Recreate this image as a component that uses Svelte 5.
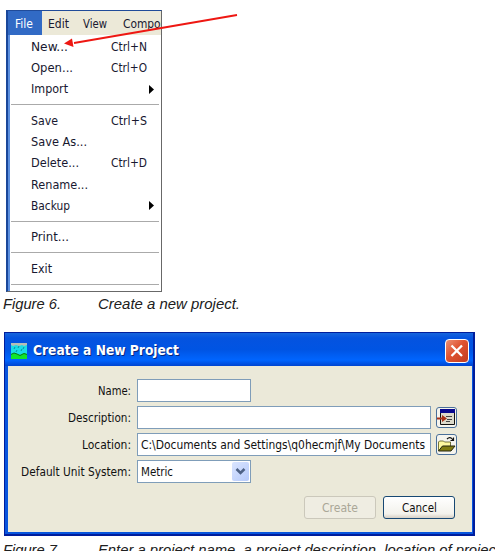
<script>
  const menu = [
    { label: 'New...', w: 37, key: 'Ctrl+N' },
    { label: 'Open...', w: 42, key: 'Ctrl+O' },
    { label: 'Import', w: 37, sub: true },
    { sep: true },
    { label: 'Save', w: 27, key: 'Ctrl+S' },
    { label: 'Save As...', w: 56, key: '' },
    { label: 'Delete...', w: 48, key: 'Ctrl+D' },
    { label: 'Rename...', w: 57, key: '' },
    { label: 'Backup', w: 39, sub: true },
    { sep: true },
    { label: 'Print...', w: 38, key: '' },
    { sep: true },
    { label: 'Exit', w: 21, key: '' },
    { sep: true }
  ];
</script>

{#snippet fit(value, width, kind = '')}
  <svg class="fit {kind}" {width} height="20"><text x="0" y="14" textLength={width} lengthAdjust="spacingAndGlyphs">{value}</text></svg>
{/snippet}

<main>
  <section class="shot">
    <div class="menubar">
      <div class="active">{@render fit('File', 18)}</div>
      <div class="edit">{@render fit('Edit', 21)}</div>
      <div class="view">{@render fit('View', 24)}</div>
      <div class="comp">{@render fit('Compor', 42)}</div>
    </div>
    <div class="menu">
      {#each menu as item}
        {#if item.sep}
          <div class="sep"></div>
        {:else}
          <div class="item">
            {@render fit(item.label, item.w)}
            {#if item.key}<span class="key">{@render fit(item.key, 36)}</span>{/if}
            {#if item.sub}<svg class="tri" width="5" height="9"><path d="M0 0L5 4.5L0 9Z" /></svg>{/if}
          </div>
        {/if}
      {/each}
    </div>
  </section>
  <svg class="arrow" width="180" height="40" viewBox="0 0 180 40">
    <path d="M177 5L14 33" stroke="#ee1712" stroke-width="1.8" />
    <path d="M4 33.5L12 28.5L13.5 37Z" fill="#ee1712" />
  </svg>

  <div class="caption">
    <span class="number">{@render fit('Figure 6.', 58, 'cap')}</span>
    {@render fit('Create a new project.', 142, 'cap')}
  </div>

  <section class="dialog">
    <header>
      <svg width="16" height="16" viewBox="0 0 16 16">
        <path fill="#18dce6" d="M0 0h16v16H0z" />
        <path fill="#b5bdb5" d="M0 0h16v2l-3 1-2-1-3 1-3-1-3 1-2-1z" />
        <path stroke="#08758c" stroke-width=".8" d="M4 4l-1 2M8 3l-1 2M13 4l-1 2M6 7l-1 2M11 6l-1 2" />
        <path fill="#10e52b" d="M0 11l3-1 3 1 3 1 4-2 3 1v5H0z" />
        <path stroke="#087b18" fill="none" d="M0 11.5l3-1.5 3 1 3 1.5 4-2 3 1" />
      </svg>
      {@render fit('Create a New Project', 146, 'title')}
      <div class="close">
        <svg width="24" height="24" viewBox="0 0 24 24"><path d="M6.5 6.5L17 17M17 6.5L6.5 17" stroke="#fff" stroke-width="2.3" /></svg>
      </div>
    </header>
    <div class="body">
      <div class="row">
        <div class="label">{@render fit('Name:', 33)}</div>
        <div class="field short"></div>
      </div>
      <div class="row">
        <div class="label">{@render fit('Description:', 63)}</div>
        <div class="field"></div>
        <div class="tool">
          <svg width="19" height="19" viewBox="0 0 19 19">
            <path fill="#dcdacb" stroke="#111" d="M3.5 2.5h14v14h-14z" />
            <path fill="#08088e" d="M3 1h15v4H3z" />
            <path stroke="#444" d="M9 8.5h6M10 11.5h5M9 13.5h4" />
            <path fill="#a83218" d="M0 9.5h5V7l5 3.5-5 3.5v-2.5H0z" />
          </svg>
        </div>
      </div>
      <div class="row">
        <div class="label">{@render fit('Location:', 49)}</div>
        <div class="field">{@render fit('C:\\Documents and Settings\\q0hecmjf\\My Documents', 284)}</div>
        <div class="tool">
          <svg width="19" height="19" viewBox="0 0 19 19">
            <path fill="#fff9a0" stroke="#55551a" stroke-width=".8" d="M1.5 16V7l1-1h4l1 1h6v4" />
            <path fill="#817d12" stroke="#25250c" d="M1.5 16l4-5h12.5l-4 5z" />
            <path fill="none" stroke="#111" stroke-width="1.2" d="M10 4c2-2 4-2 6 1M16.5 2.5v3h-3" />
          </svg>
        </div>
      </div>
      <div class="row">
        <div class="label">{@render fit('Default Unit System:', 110)}</div>
        <div class="field short">
          {@render fit('Metric', 32)}
          <div class="drop"><svg width="17" height="19"><path d="M4.5 7L8.5 11L12.5 7" fill="none" stroke="#4d6185" stroke-width="2.5" /></svg></div>
        </div>
      </div>
      <div class="actions">
        <div class="button disabled">{@render fit('Create', 36)}</div>
        <div class="button">{@render fit('Cancel', 35)}</div>
      </div>
    </div>
  </section>

  <div class="caption second">
    <span class="number">{@render fit('Figure 7.', 58, 'cap')}</span>
    {@render fit('Enter a project name, a project description, location of projec', 398, 'cap')}
  </div>
</main>

<style>
  :global(body) { margin: 0; background: #fff; }
  main { position: relative; box-sizing: border-box; width: 495px; height: 551px; padding-top: 10px; overflow: hidden; font: 12px "DejaVu Sans Condensed", "DejaVu Sans", sans-serif; color: #181830; }
  svg { display: block; flex: none; }
  .fit { overflow: visible; font-family: "DejaVu Sans Condensed", "DejaVu Sans", sans-serif; font-size: 11.8px; fill: currentColor; }
  .shot { box-sizing: border-box; width: 156px; height: 282px; margin-left: 6px; border: 1px solid #686868; border-left: 2px solid #19479a; border-top-color: #204b99; overflow: hidden; }
  .menubar { display: flex; height: 24px; background: #ece9d8; }
  .menubar > div { flex: none; box-sizing: border-box; padding-top: 3px; height: 24px; }
  .menubar .active { width: 34px; padding-left: 7px; background: #316ac5; color: #fff; }
  .edit { padding-left: 6px; width: 35px; }
  .view { padding-left: 6px; width: 40px; }
  .comp { padding-left: 6px; }
  .menu { border-left: 2px solid #5b8fdf; height: 260px; padding: 1px 2px 0 1px; background: #fff; }
  .item { display: flex; align-items: center; height: 21.3px; padding-left: 20px; position: relative; }
  .item .key { position: absolute; left: 100px; }
  .tri { margin-left: auto; margin-right: 5px; fill: #000; }
  .sep { height: 1px; margin: 4px 0 5.2px; background: #aaa; }
  .arrow { position: absolute; left: 60px; top: 10px; }
  .caption { display: flex; padding: 3px 0 0 3px; height: 20px; color: #202020; }
  .number { flex: none; width: 95px; }
  .cap { font-family: "Liberation Sans", Arial, sans-serif; font-style: italic; font-size: 14.5px; }
  .dialog { box-sizing: border-box; width: 471px; height: 204px; margin: 17px 0 0 4px; border: 1px solid #001d9c; border-right-width: 2px; border-bottom-width: 2px; background: #0855dd; }
  header { display: flex; align-items: center; box-sizing: border-box; height: 33px; padding: 2px 4px 0 6px; gap: 5.5px; color: #fff; background: linear-gradient(#1765dc 0, #0553df 15%, #0054e3 50%, #0065ff 82%, #0044d0); }
  .title { font-size: 13.6px; font-weight: bold; text-shadow: 1px 1px #06277c; }
  .close { box-sizing: border-box; width: 24px; height: 24px; margin-left: auto; border: 1.5px solid #fff; border-radius: 4px; background: linear-gradient(135deg, #ed9276, #df5230 45%, #c23d20); }
  .close svg { margin: -1px; }
  .body { box-sizing: border-box; height: 166px; margin: 0 1px 0 3px; padding-top: 13px; background: #ebe9d9; color: #111; }
  .row { display: flex; align-items: center; height: 23px; margin-bottom: 4px; }
  .label { display: flex; justify-content: flex-end; width: 123px; margin-right: 6px; }
  .field { box-sizing: border-box; display: flex; align-items: center; width: 294px; height: 23px; border: 1px solid #7f9db9; padding-left: 3px; background: #fff; }
  .field.short { width: 114px; }
  .tool { box-sizing: border-box; width: 21px; height: 21px; margin-left: 5px; border: 1px solid #496f99; border-radius: 3px; background: #f5f4ee; }
  .drop { width: 17px; height: 19px; margin: 0 1px 0 auto; border-radius: 2px; background: linear-gradient(135deg, #dae5ff, #b5c9fa); }
  .actions { display: flex; gap: 7px; margin: 13px 0 0 296px; }
  .button { display: flex; align-items: center; justify-content: center; box-sizing: border-box; width: 72px; height: 23px; border: 1px solid #174873; border-radius: 3px; background: linear-gradient(#fff, #f3f2ec 80%, #d7d0c5); }
  .disabled { border-color: #cbc8bb; background: #efede2; color: #aaa797; }
  .second { padding-top: 5px; }
</style>
